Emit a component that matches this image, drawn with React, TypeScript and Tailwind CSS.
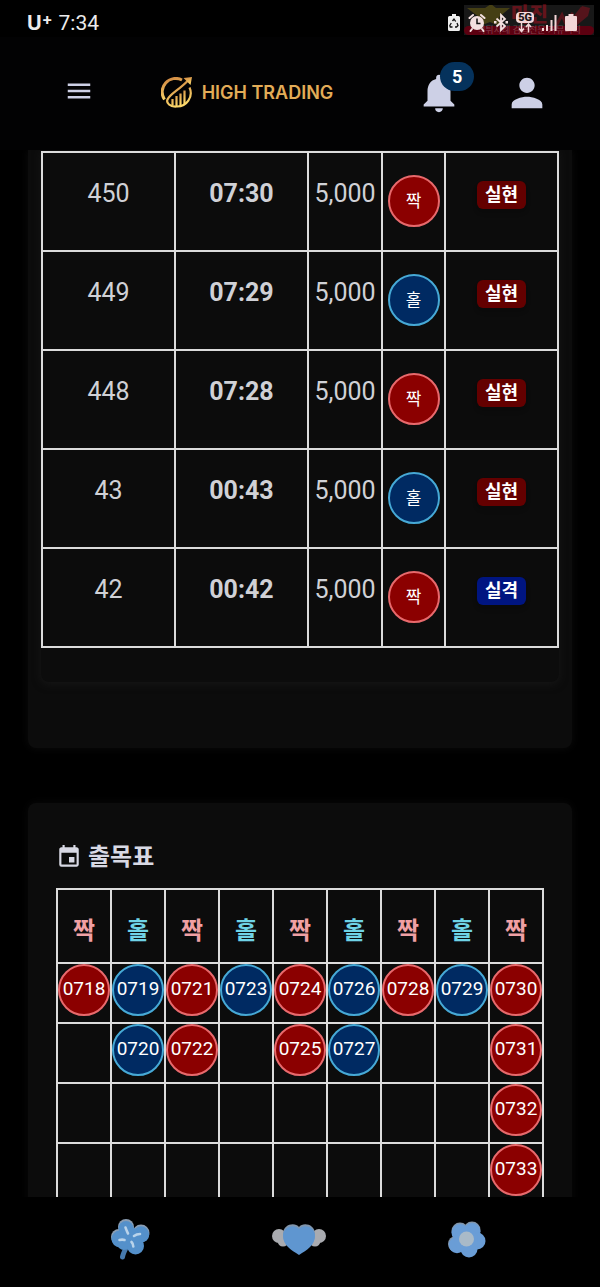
import type { ReactNode } from 'react';
import clsx from 'clsx';
import { MdEvent, MdMenu, MdNotifications, MdPerson } from 'react-icons/md';

type Side = 'even' | 'odd';

const LABEL: Record<Side, string> = { even: '짝', odd: '홀' };

const trades: { round: number; time: string; amount: string; side: Side; won: boolean }[] = [
  { round: 450, time: '07:30', amount: '5,000', side: 'even', won: true },
  { round: 449, time: '07:29', amount: '5,000', side: 'odd', won: true },
  { round: 448, time: '07:28', amount: '5,000', side: 'even', won: true },
  { round: 43, time: '00:43', amount: '5,000', side: 'odd', won: true },
  { round: 42, time: '00:42', amount: '5,000', side: 'even', won: false },
];

const streaks: { side: Side; rounds: string[] }[] = [
  { side: 'even', rounds: ['0718'] },
  { side: 'odd', rounds: ['0719', '0720'] },
  { side: 'even', rounds: ['0721', '0722'] },
  { side: 'odd', rounds: ['0723'] },
  { side: 'even', rounds: ['0724', '0725'] },
  { side: 'odd', rounds: ['0726', '0727'] },
  { side: 'even', rounds: ['0728'] },
  { side: 'odd', rounds: ['0729'] },
  { side: 'even', rounds: ['0730', '0731', '0732', '0733'] },
];

function Ball({ side, className, children }: { side: Side; className?: string; children: ReactNode }) {
  return (
    <span
      className={clsx(
        'mx-auto flex size-[52px] items-center justify-center rounded-full border-2 text-white',
        side === 'even' ? 'border-[#e8696c] bg-[#8b0000]' : 'border-[#46a9d6] bg-[#002a62]',
        className,
      )}
    >
      {children}
    </span>
  );
}

function StatusBar() {
  return (
    <div className="relative flex h-[37px] shrink-0 items-center justify-between bg-black pl-[27px] pr-[22px] pt-2 text-[#ececec]">
      {/* Community stamp in the corner */}
      <div className="absolute right-1.5 top-[5px] flex h-[30px] w-[130px] flex-col justify-end bg-[#777]/20">
        <svg className="absolute inset-x-0 top-0 h-[22px] w-full opacity-40" viewBox="0 0 130 22">
          <path fill="#8a7a10" d="M3 3h18l6-4 5 4h14L35 12l3 10-12-5-13 5 2-10z" />
          <path fill="none" stroke="#b01020" strokeWidth="3" d="M92 21 98 10l3 7 8-9M104 21l14-18" />
          <path fill="#b01020" d="M110 14 118 1l8 2-2 8-12 10z" />
        </svg>
        <span className="absolute left-[47px] top-0 text-xl font-black leading-[21px] text-[#b01020]/50">마진</span>
        <span className="relative rounded-full bg-[#5c0010] text-center text-[9px] leading-[9px] text-white/25">
          먹튀사례 검증전문 커뮤니티
        </span>
      </div>

      <div className="flex items-center gap-1.5">
        <span className="flex items-start font-['Inter','Liberation_Sans',sans-serif] text-xl font-bold leading-6">
          U<sup className="top-0 text-base leading-4">+</sup>
        </span>
        <span className="text-[21px] leading-6">7:34</span>
      </div>

      <div className="relative flex items-center gap-[7px]">
        <svg className="h-[19px] w-[14px]" viewBox="0 0 14 19">
          <path fill="currentColor" d="M5 1h4v2h2.500A1.500 1.500 0 0 1 13 4.500v12a1.500 1.500 0 0 1-1.500 1.500h-9A1.500 1.500 0 0 1 1 16.500v-12A1.500 1.500 0 0 1 2.500 3H5z" />
          <path fill="none" stroke="#111" strokeWidth="1.300" d="M5.500 8 7 6l1.700 2.500M10 10l1 2.500-1.500 1.500H8M5.500 14H3.300l-.5-1.500L4.300 10" />
        </svg>
        <svg className="h-[19px] w-[18px] text-[#f3e0e0]" viewBox="0 0 18 19">
          <circle cx="9" cy="10" r="7" fill="currentColor" />
          <path fill="none" stroke="currentColor" strokeWidth="2" strokeLinecap="round" d="M1.500 5 5 2M16.500 5 13 2M4 16l-1.500 2M14 16l1.500 2" />
          <path fill="none" stroke="#111" strokeWidth="1.500" d="M9 5.500V10.500h3.500" />
        </svg>
        <svg className="h-[19px] w-4 text-[#f3e0e0]" viewBox="0 0 16 19">
          <path fill="none" stroke="currentColor" strokeWidth="1.800" d="M3.500 5.500 12 13l-4 4V2l4 4-8.500 7.500" />
          <path fill="currentColor" d="M1 8h2.500v2.500H1zM12.500 8H15v2.500h-2.500z" />
        </svg>
        <span className="flex flex-col items-center text-[#f3d6d8]">
          <span className="rounded-sm bg-[#f3d6d8] px-0.5 text-[11px] font-black leading-[11px] text-[#221416]">5G</span>
          <svg className="h-[10px] w-4" viewBox="0 0 16 10">
            <path fill="none" stroke="currentColor" strokeWidth="1.500" d="M4.500 0v8M2 5.500 4.500 8.500 7 5.500M11.500 9.500V1.500M9 4l2.500-3L14 4" />
          </svg>
        </span>
        <svg className="h-[19px] w-4 text-[#f3d6d8]" viewBox="0 0 16 19">
          <path fill="currentColor" d="M1 15h2v3H1zM5 12h2v6H5zM9.500 7h2v11h-2zM13.500 2h2v16h-2z" />
        </svg>
        <svg className="h-[19px] w-[14px] text-[#f3d6d8]" viewBox="0 0 14 19">
          <path fill="currentColor" d="M4.500 1h5v2H12a1 1 0 0 1 1 1v13a1 1 0 0 1-1 1H2a1 1 0 0 1-1-1V4a1 1 0 0 1 1-1h2.500z" />
        </svg>
      </div>
    </div>
  );
}

function Logo() {
  return (
    <a href="#" className="mr-4 flex items-center gap-2.5">
      <svg className="size-[31px]" viewBox="0 0 31 31" aria-hidden="true">
        <defs>
          <linearGradient id="gold" x1="0" y1="0" x2="0.300" y2="1">
            <stop offset="0" stopColor="#cf8440" />
            <stop offset="1" stopColor="#fbd66a" />
          </linearGradient>
        </defs>
        <g fill="none" stroke="url(#gold)">
          <path strokeWidth="3" d="M3.500 22.500A13.500 13.500 0 0 1 21 3" />
          <path strokeWidth="2.200" d="M28.500 10.500A13.500 13.500 0 0 1 15.500 29.500C9 30 5 26 6.500 22.500 9 17 18 13 27 3.500" />
          <path strokeWidth="2.200" d="M11.500 28v-6M15.500 29v-10M19.500 29V16.500M23.500 27V13.500" />
        </g>
        <path fill="url(#gold)" d="M22.500 1 31 0l-1.500 8z" />
      </svg>
      <span className="font-['Inter','Liberation_Sans',sans-serif] text-lg font-semibold leading-6 text-[#e3ac57]">HIGH TRADING</span>
    </a>
  );
}

function Header() {
  return (
    <header className="flex h-[113px] shrink-0 items-center justify-between bg-[#020203] pb-0.5 pl-16 pr-[50px] text-[#cdd0e6]">
      <button type="button" aria-label="메뉴" className="mb-1">
        <MdMenu className="size-[30px]" />
      </button>
      <Logo />
      <div className="flex items-center gap-[42px]">
        <button type="button" aria-label="알림" className="relative">
          <MdNotifications className="size-[46px]" />
          <span className="absolute -top-2 left-6 rounded-full bg-[#05325c] px-3 text-lg font-bold leading-[29px] text-white">5</span>
        </button>
        <button type="button" aria-label="내 정보">
          <MdPerson className="size-[46px]" />
        </button>
      </div>
    </header>
  );
}

function TradeTable() {
  return (
    <section className="rounded-b-lg bg-[#0c0c0c] px-[13px] pb-[66px] shadow-[0_0_10px_#0c0c0c]">
      <div className="rounded-b-lg pb-[34px] pt-px shadow-[0_2px_8px_#171717]">
        <table className="w-full table-fixed border-collapse text-center text-[25px] leading-8 text-[#d0d1d6]">
          <colgroup>
            <col className="w-[133px]" />
            <col className="w-[133px]" />
            <col className="w-[74px]" />
            <col className="w-[63px]" />
            <col />
          </colgroup>
          <tbody>
            {trades.map((t) => (
              <tr key={t.round} className="h-[99px] align-top *:border-2 *:border-[#dcdcdc] *:p-0">
                <td>
                  <div className="pt-[25px]">{t.round}</div>
                </td>
                <td>
                  <div className="pt-[25px] font-bold">{t.time}</div>
                </td>
                <td>
                  <div className="pt-[25px]">{t.amount}</div>
                </td>
                <td>
                  <div className="pt-[22px]">
                    <Ball side={t.side} className="text-[17px]">
                      {LABEL[t.side]}
                    </Ball>
                  </div>
                </td>
                <td>
                  <div className="flex justify-center pt-7">
                    <span
                      className={clsx(
                        'rounded-md px-2 text-lg font-bold leading-7 text-white shadow-md',
                        t.won ? 'bg-[#640000]' : 'bg-[#001581]',
                      )}
                    >
                      {t.won ? '실현' : '실격'}
                    </span>
                  </div>
                </td>
              </tr>
            ))}
          </tbody>
        </table>
      </div>
    </section>
  );
}

function StreakBoard() {
  return (
    <section className="rounded-lg bg-[#0c0c0c] px-7 pb-10 pt-9 shadow-[0_0_10px_#0a0a0a]">
      <h2 className="flex items-center gap-1.5 pb-[13px] text-2xl font-bold leading-9 text-[#d8d9e4]">
        <MdEvent className="size-[26px]" />
        출목표
      </h2>
      <table className="w-full table-fixed border-collapse text-center text-[19px] text-white">
        <thead>
          <tr className="h-[74px]">
            {streaks.map((s, i) => (
              <th
                key={i}
                className={clsx(
                  'border-2 border-[#dcdcdc] p-0 pt-2.5 text-2xl font-bold',
                  s.side === 'even' ? 'text-[#f0a0a4]' : 'text-[#6fd3e6]',
                )}
              >
                {LABEL[s.side]}
              </th>
            ))}
          </tr>
        </thead>
        <tbody>
          {[0, 1, 2, 3].map((row) => (
            <tr key={row} className="h-[60px] align-top">
              {streaks.map((s, i) => (
                <td key={i} className="border-2 border-[#dcdcdc] p-0">
                  {s.rounds[row] && (
                    <Ball side={s.side} className="pb-0.5">
                      {s.rounds[row]}
                    </Ball>
                  )}
                </td>
              ))}
            </tr>
          ))}
        </tbody>
      </table>
    </section>
  );
}

function BottomNav() {
  return (
    <nav className="flex h-[90px] shrink-0 items-center bg-black pb-1 pl-[47px] pr-[49px]">
      <button type="button" aria-label="행운" className="flex flex-1 justify-center">
        <svg className="size-[44px]" viewBox="0 0 44 44">
          <path stroke="#4679ad" strokeWidth="5" strokeLinecap="round" fill="none" d="M17 30c-2 4-3 6-3.500 9" />
          <g fill="#8a9db3">
            <circle cx="17" cy="9" r="8" />
            <circle cx="32" cy="15" r="8.500" />
            <circle cx="10" cy="19" r="8" />
          </g>
          <g fill="#5490ca">
            <circle cx="17" cy="10.500" r="7.500" />
            <circle cx="32" cy="16.500" r="8.200" />
            <circle cx="11" cy="21" r="8.500" />
            <circle cx="15" cy="25" r="7" />
            <circle cx="26.500" cy="28" r="8.500" />
            <circle cx="21" cy="19" r="10" />
          </g>
          <path stroke="#b9d3ea" strokeWidth="2.600" strokeLinecap="round" fill="none" d="M16.500 9.500c.5 2 1.500 3.500 2.500 6M25 18c2-1.500 4-2 6-2M10.500 22c2-.5 3.500-.5 5 0M22.500 24c1 1 1.800 2.500 1.800 4.500" />
        </svg>
      </button>
      <button type="button" aria-label="찜" className="flex flex-1 justify-center">
        <svg className="h-[34px] w-[56px]" viewBox="0 0 56 34">
          <g fill="#a9abb0">
            <circle cx="8" cy="13" r="7" />
            <circle cx="12" cy="18" r="5.500" />
            <circle cx="48" cy="13" r="7" />
            <circle cx="44" cy="18" r="5.500" />
          </g>
          <path fill="#8195ab" d="M28 31C20 26 12 21 12 11 12 1 24-1 28 4c4-5 16-3 16 7 0 10-8 15-16 20z" />
          <path fill="#5f96d0" d="M28 32C20 27 12 22 12 13 12 3 24 1 28 6c4-5 16-3 16 7 0 9-8 14-16 19z" />
        </svg>
      </button>
      <button type="button" aria-label="홈" className="flex flex-1 justify-center">
        <svg className="size-[40px]" viewBox="0 0 40 40">
          <g fill="#8195ab">
            <circle cx="13" cy="11" r="8.500" />
            <circle cx="25" cy="10" r="8.500" />
            <circle cx="9" cy="24" r="8" />
          </g>
          <g fill="#6a9dd6">
            <circle cx="13" cy="12.500" r="8.500" />
            <circle cx="25" cy="11.500" r="8.500" />
            <circle cx="30" cy="21" r="8.500" />
            <circle cx="22" cy="29" r="8.500" />
            <circle cx="10" cy="25" r="8.200" />
            <circle cx="19" cy="20" r="12" />
          </g>
          <circle cx="19.500" cy="19" r="7.500" fill="#a9bac8" />
        </svg>
      </button>
    </nav>
  );
}

export default function App() {
  return (
    <div className="flex h-screen flex-col overflow-hidden bg-black font-['Roboto','Noto_Sans_CJK_KR',sans-serif]">
      <StatusBar />
      <Header />
      <main className="flex min-h-0 flex-1 flex-col gap-[55px] overflow-y-auto px-7 [scrollbar-width:none]">
        <TradeTable />
        <StreakBoard />
      </main>
      <BottomNav />
    </div>
  );
}
